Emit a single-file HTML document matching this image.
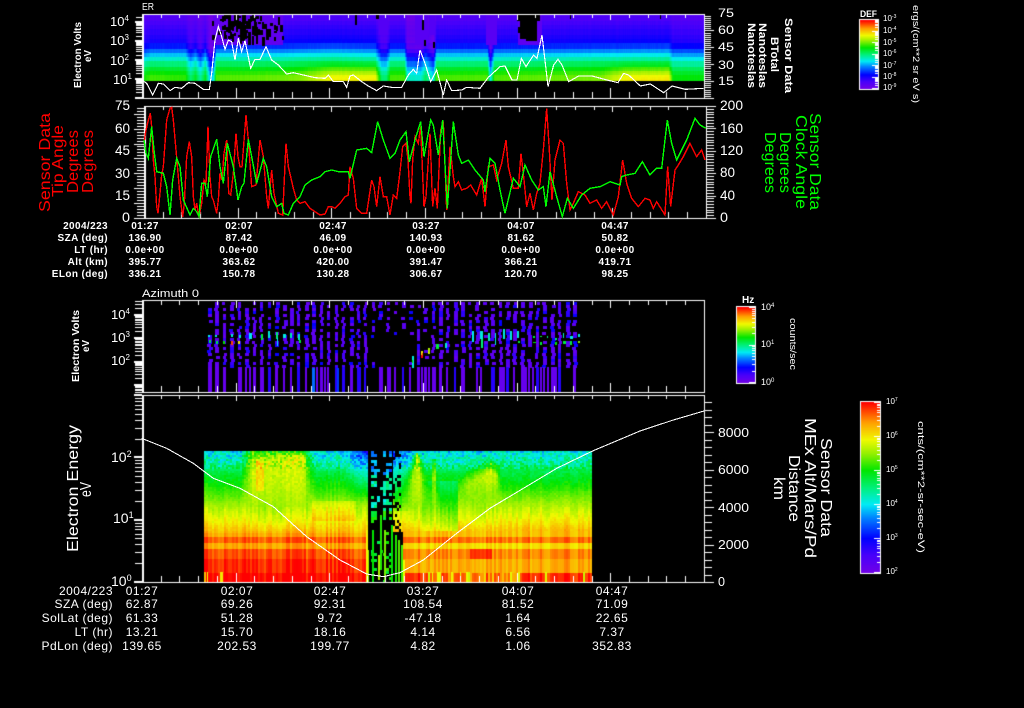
<!DOCTYPE html>
<html><head><meta charset="utf-8"><title>Sensor Data</title>
<style>
html,body{margin:0;padding:0;background:#000;width:1024px;height:708px;overflow:hidden}
canvas,svg{position:absolute;left:0;top:0;display:block}
text{font-family:"Liberation Sans",sans-serif;fill:#fff}
.t{font-size:10px;letter-spacing:.4px;font-weight:bold}
.u{font-size:12px;letter-spacing:.5px}
.m{text-anchor:middle}.e{text-anchor:end}
.r{fill:#f00}.g{fill:#0f0}
.l{fill:none;stroke-width:4.2;stroke-linejoin:miter}
</style></head><body>
<canvas id="c" width="1024" height="708"></canvas>
<svg width="1024" height="708" viewBox="0 0 1024 708" xmlns="http://www.w3.org/2000/svg">
<g shape-rendering="crispEdges">
<g transform="scale(.33333)"><polyline class="l" stroke="#fff" style="stroke-width:3.4" points="426,240 440,250 458,285 475,250 490,252 510,272 525,262 545,265 565,248 585,250 610,268 628,268 635,220 645,120 655,80 665,110 675,148 685,120 695,125 705,180 715,115 725,155 735,122 752,205 765,178 780,178 798,140 815,180 835,195 860,222 880,218 910,225 945,233 975,235 985,225 1000,245 1030,245 1040,262 1050,228 1060,225 1085,245 1105,258 1130,272 1150,258 1175,262 1205,262 1225,225 1240,208 1250,220 1260,150 1275,190 1292,245 1310,210 1330,285 1340,240 1355,272 1385,270 1400,262 1440,265 1465,232 1500,200 1515,198 1536,240 1551,240 1564,175 1578,200 1601,165 1611,175 1626,105 1636,190 1644,260 1661,195 1674,178 1686,195 1706,245 1736,228 1776,228 1821,240 1854,248 1871,220 1886,225 1921,258 1951,252 1991,278 2016,258 2056,268 2111,265"/></g>
<g transform="translate(0,100) scale(.33333)">
<polyline class="l" stroke="#f00" points="432,130 437,95 445,60 451,40 455,80 460,180 465,230 470,320 474,340 480,280 485,225 490,200 500,60 510,25 515,22 520,60 528,150 535,230 540,290 548,350 553,310 560,170 568,125 575,170 580,290 585,330 590,310 597,350 605,310 612,240 618,250 624,80 630,230 635,290 640,300 650,340 655,300 660,220 666,240 672,160 680,120 686,280 692,285 700,220 708,100 714,170 720,200 726,200 738,45 745,120 755,260 768,255 780,120 790,170 800,290 805,325 815,210 822,280 835,340 848,345 858,130 865,200 880,265 890,300 900,310 915,305 930,325 945,335 960,345 975,342 985,320 995,320 1005,325 1020,310 1035,290 1045,285 1050,200 1060,235 1070,325 1085,340 1100,340 1115,240 1122,260 1130,320 1140,230 1150,290 1160,290 1170,345 1180,285 1190,295 1200,215 1208,140 1218,130 1224,180 1230,290 1233,310 1238,180 1245,110 1255,130 1262,80 1272,320 1278,290 1290,100 1298,320 1305,265 1312,325 1322,90 1330,65 1340,330 1350,140 1360,230 1365,260 1375,245 1385,270 1400,265 1412,255 1430,285 1445,235 1455,320 1465,200 1480,195 1490,240 1505,190 1518,120 1525,200 1540,265 1555,265 1563,160 1572,240 1580,320 1590,280 1600,330 1610,280 1620,250 1630,150 1640,25 1648,150 1656,300 1665,180 1680,120 1690,130 1700,250 1710,330 1720,310 1735,275 1755,285 1770,310 1790,300 1805,325 1820,305 1840,345 1855,290 1868,180 1880,250 1895,295 1915,320 1935,295 1950,300 1960,325 1970,305 1995,345 2003,200 2012,320 2025,210 2035,195 2050,170 2070,130 2090,170 2105,150 2115,180"/>
<polyline class="l" stroke="#0f0" points="432,120 438,160 445,175 455,80 462,150 470,215 490,220 500,260 510,345 518,240 530,175 540,200 550,300 570,345 580,325 590,335 597,350 605,250 615,250 622,290 632,170 650,118 660,200 670,250 682,130 700,200 714,300 725,260 732,250 745,118 755,170 770,250 790,175 800,200 815,290 830,320 845,310 852,340 865,345 880,310 900,290 915,255 935,240 960,230 975,215 995,210 1015,215 1045,215 1050,235 1070,150 1100,145 1115,158 1133,65 1150,120 1170,175 1185,160 1200,120 1218,95 1228,185 1245,120 1262,65 1272,170 1292,60 1300,75 1315,165 1328,60 1342,325 1360,65 1375,165 1385,190 1405,180 1425,210 1450,240 1455,275 1470,175 1485,190 1500,270 1515,340 1540,235 1560,260 1575,195 1595,240 1615,270 1630,260 1638,320 1650,215 1670,290 1687,350 1702,295 1720,325 1745,285 1770,265 1800,260 1830,245 1860,255 1865,230 1880,225 1905,220 1927,185 1950,225 1970,205 1985,205 2002,60 2015,130 2030,180 2060,120 2085,55 2100,75 2118,85"/>
</g>
<g transform="translate(40,400) scale(.33333)"><polyline class="l" stroke="#fff" style="stroke-width:3.2" points="305,115 380,145 460,190 520,235 600,265 700,320 800,410 900,480 980,522 1030,530 1080,518 1150,480 1250,400 1350,325 1450,265 1550,205 1660,152 1800,93 1900,60 1992,33"/></g>
</g>

<!-- panel 1 -->
<text x="142" y="10" font-size="10" textLength="12" lengthAdjust="spacingAndGlyphs">ER</text>
<text transform="translate(81,88) rotate(-90)" font-size="10" font-weight="bold" textLength="66" lengthAdjust="spacingAndGlyphs">Electron Volts</text>
<text transform="translate(91,62) rotate(-90)" font-size="10" font-weight="bold" textLength="12" lengthAdjust="spacingAndGlyphs">eV</text>
<text x="110" y="26" font-size="13">10<tspan dy="-5" font-size="8">4</tspan></text>
<text x="110" y="45" font-size="13">10<tspan dy="-5" font-size="8">3</tspan></text>
<text x="110" y="65" font-size="13">10<tspan dy="-5" font-size="8">2</tspan></text>
<text x="113" y="84" font-size="13">10<tspan dy="-5" font-size="8">1</tspan></text>
<text x="718" y="17" font-size="12" textLength="16" lengthAdjust="spacingAndGlyphs">75</text>
<text x="718" y="34" font-size="12" textLength="16" lengthAdjust="spacingAndGlyphs">60</text>
<text x="718" y="51" font-size="12" textLength="16" lengthAdjust="spacingAndGlyphs">45</text>
<text x="718" y="69" font-size="12" textLength="16" lengthAdjust="spacingAndGlyphs">30</text>
<text x="718" y="85" font-size="12" textLength="16" lengthAdjust="spacingAndGlyphs">15</text>
<g font-weight="bold">
<text transform="translate(785,18) rotate(90)" font-size="11" textLength="75" lengthAdjust="spacingAndGlyphs">Sensor Data</text>
<text transform="translate(771,37) rotate(90)" font-size="11" textLength="35" lengthAdjust="spacingAndGlyphs">BTotal</text>
<text transform="translate(759,23) rotate(90)" font-size="11" textLength="65" lengthAdjust="spacingAndGlyphs">Nanoteslas</text>
<text transform="translate(748,23) rotate(90)" font-size="11" textLength="65" lengthAdjust="spacingAndGlyphs">Nanoteslas</text>
</g>
<text x="860" y="17" font-size="9" font-weight="bold" textLength="17" lengthAdjust="spacingAndGlyphs">DEF</text>
<g font-size="8"><text x="883" y="21">10<tspan dy="-3" font-size="5">-3</tspan></text><text x="883" y="33">10<tspan dy="-3" font-size="5">-4</tspan></text><text x="883" y="45">10<tspan dy="-3" font-size="5">-5</tspan></text><text x="883" y="56">10<tspan dy="-3" font-size="5">-6</tspan></text><text x="883" y="68">10<tspan dy="-3" font-size="5">-7</tspan></text><text x="883" y="79">10<tspan dy="-3" font-size="5">-8</tspan></text><text x="883" y="90">10<tspan dy="-3" font-size="5">-9</tspan></text></g>
<text transform="translate(913,5) rotate(90)" font-size="9" textLength="98" lengthAdjust="spacingAndGlyphs">ergs/(cm**2 sr eV s)</text>

<!-- panel 2 -->
<g class="r" font-size="16"><text class="r" transform="translate(50,212) rotate(-90)" textLength="99" lengthAdjust="spacingAndGlyphs">Sensor Data</text>
<text class="r" transform="translate(63,197) rotate(-90)" textLength="72" lengthAdjust="spacingAndGlyphs">Tip Angle</text>
<text class="r" transform="translate(78,193) rotate(-90)" textLength="63" lengthAdjust="spacingAndGlyphs">Degrees</text>
<text class="r" transform="translate(93,193) rotate(-90)" textLength="63" lengthAdjust="spacingAndGlyphs">Degrees</text></g>
<g font-size="14">
<text x="115" y="110" textLength="15" lengthAdjust="spacingAndGlyphs">75</text><text x="115" y="133" textLength="15" lengthAdjust="spacingAndGlyphs">60</text><text x="115" y="155" textLength="15" lengthAdjust="spacingAndGlyphs">45</text><text x="115" y="178" textLength="15" lengthAdjust="spacingAndGlyphs">30</text><text x="115" y="200" textLength="15" lengthAdjust="spacingAndGlyphs">15</text><text x="122" y="222" textLength="8" lengthAdjust="spacingAndGlyphs">0</text>
<text x="720" y="110" textLength="23" lengthAdjust="spacingAndGlyphs">200</text><text x="720" y="133" textLength="23" lengthAdjust="spacingAndGlyphs">160</text><text x="720" y="155" textLength="23" lengthAdjust="spacingAndGlyphs">120</text><text x="720" y="177" textLength="15" lengthAdjust="spacingAndGlyphs">80</text><text x="720" y="200" textLength="15" lengthAdjust="spacingAndGlyphs">40</text><text x="720" y="222" textLength="8" lengthAdjust="spacingAndGlyphs">0</text></g>
<g font-size="16"><text class="g" transform="translate(810,113) rotate(90)" textLength="97" lengthAdjust="spacingAndGlyphs">Sensor Data</text>
<text class="g" transform="translate(796,115) rotate(90)" textLength="94" lengthAdjust="spacingAndGlyphs">Clock Angle</text>
<text class="g" transform="translate(780,132) rotate(90)" textLength="61" lengthAdjust="spacingAndGlyphs">Degrees</text>
<text class="g" transform="translate(765,132) rotate(90)" textLength="61" lengthAdjust="spacingAndGlyphs">Degrees</text></g>
<g class="t">
<text class="t e" x="108" y="229">2004/223</text><text class="t m" x="145" y="229">01:27</text><text class="t m" x="239" y="229">02:07</text><text class="t m" x="333" y="229">02:47</text><text class="t m" x="426" y="229">03:27</text><text class="t m" x="521" y="229">04:07</text><text class="t m" x="615" y="229">04:47</text>
<text class="t e" x="108" y="241">SZA (deg)</text><text class="t m" x="145" y="241">136.90</text><text class="t m" x="239" y="241">87.42</text><text class="t m" x="333" y="241">46.09</text><text class="t m" x="426" y="241">140.93</text><text class="t m" x="521" y="241">81.62</text><text class="t m" x="615" y="241">50.82</text>
<text class="t e" x="108" y="253">LT (hr)</text><text class="t m" x="145" y="253">0.0e+00</text><text class="t m" x="239" y="253">0.0e+00</text><text class="t m" x="333" y="253">0.0e+00</text><text class="t m" x="426" y="253">0.0e+00</text><text class="t m" x="521" y="253">0.0e+00</text><text class="t m" x="615" y="253">0.0e+00</text>
<text class="t e" x="108" y="265">Alt (km)</text><text class="t m" x="145" y="265">395.77</text><text class="t m" x="239" y="265">363.62</text><text class="t m" x="333" y="265">420.00</text><text class="t m" x="426" y="265">391.47</text><text class="t m" x="521" y="265">366.21</text><text class="t m" x="615" y="265">419.71</text>
<text class="t e" x="108" y="277">ELon (deg)</text><text class="t m" x="145" y="277">336.21</text><text class="t m" x="239" y="277">150.78</text><text class="t m" x="333" y="277">130.28</text><text class="t m" x="426" y="277">306.67</text><text class="t m" x="521" y="277">120.70</text><text class="t m" x="615" y="277">98.25</text>
</g>

<!-- panel 3 -->
<text x="142" y="297" font-size="11" textLength="57" lengthAdjust="spacingAndGlyphs">Azimuth 0</text>
<text transform="translate(79,382) rotate(-90)" font-size="10" font-weight="bold" textLength="72" lengthAdjust="spacingAndGlyphs">Electron Volts</text>
<text transform="translate(89,352) rotate(-90)" font-size="10" font-weight="bold" textLength="12" lengthAdjust="spacingAndGlyphs">eV</text>
<text x="111" y="319" font-size="13">10<tspan dy="-5" font-size="8">4</tspan></text>
<text x="111" y="342" font-size="13">10<tspan dy="-5" font-size="8">3</tspan></text>
<text x="111" y="365" font-size="13">10<tspan dy="-5" font-size="8">2</tspan></text>
<text x="742" y="303" font-size="10" font-weight="bold">Hz</text>
<text x="761" y="310" font-size="9">10<tspan dy="-3" font-size="6">4</tspan></text>
<text x="761" y="347" font-size="9">10<tspan dy="-3" font-size="6">1</tspan></text>
<text x="761" y="385" font-size="9">10<tspan dy="-3" font-size="6">0</tspan></text>
<text transform="translate(790,318) rotate(90)" font-size="9" textLength="52" lengthAdjust="spacingAndGlyphs">counts/sec</text>

<!-- panel 4 -->
<text transform="translate(78,552) rotate(-90)" font-size="16" textLength="127" lengthAdjust="spacingAndGlyphs">Electron Energy</text>
<text transform="translate(91,497) rotate(-90)" font-size="16" textLength="15" lengthAdjust="spacingAndGlyphs">eV</text>
<text x="111" y="462" font-size="14">10<tspan dy="-5" font-size="9">2</tspan></text>
<text x="113" y="523" font-size="14">10<tspan dy="-5" font-size="9">1</tspan></text>
<text x="111" y="586" font-size="14">10<tspan dy="-5" font-size="9">0</tspan></text>
<g font-size="13"><text x="718" y="437" textLength="31" lengthAdjust="spacingAndGlyphs">8000</text><text x="718" y="474" textLength="31" lengthAdjust="spacingAndGlyphs">6000</text><text x="718" y="512" textLength="31" lengthAdjust="spacingAndGlyphs">4000</text><text x="718" y="549" textLength="31" lengthAdjust="spacingAndGlyphs">2000</text><text x="718" y="586" textLength="7" lengthAdjust="spacingAndGlyphs">0</text></g>
<g font-size="16"><text transform="translate(821,438) rotate(90)" textLength="99" lengthAdjust="spacingAndGlyphs">Sensor Data</text>
<text transform="translate(805,418) rotate(90)" textLength="140" lengthAdjust="spacingAndGlyphs">MEx Alt/Mars/Pd</text>
<text transform="translate(789,455) rotate(90)" textLength="67" lengthAdjust="spacingAndGlyphs">Distance</text>
<text transform="translate(774,477) rotate(90)" textLength="23" lengthAdjust="spacingAndGlyphs">km</text></g>
<g>
<text class="u e" x="113" y="595">2004/223</text><text class="u m" x="142" y="595">01:27</text><text class="u m" x="237" y="595">02:07</text><text class="u m" x="330" y="595">02:47</text><text class="u m" x="423" y="595">03:27</text><text class="u m" x="518" y="595">04:07</text><text class="u m" x="612" y="595">04:47</text>
<text class="u e" x="113" y="608">SZA (deg)</text><text class="u m" x="142" y="608">62.87</text><text class="u m" x="237" y="608">69.26</text><text class="u m" x="330" y="608">92.31</text><text class="u m" x="423" y="608">108.54</text><text class="u m" x="518" y="608">81.52</text><text class="u m" x="612" y="608">71.09</text>
<text class="u e" x="113" y="622">SolLat (deg)</text><text class="u m" x="142" y="622">61.33</text><text class="u m" x="237" y="622">51.28</text><text class="u m" x="330" y="622">9.72</text><text class="u m" x="423" y="622">-47.18</text><text class="u m" x="518" y="622">1.64</text><text class="u m" x="612" y="622">22.65</text>
<text class="u e" x="113" y="636">LT (hr)</text><text class="u m" x="142" y="636">13.21</text><text class="u m" x="237" y="636">15.70</text><text class="u m" x="330" y="636">18.16</text><text class="u m" x="423" y="636">4.14</text><text class="u m" x="518" y="636">6.56</text><text class="u m" x="612" y="636">7.37</text>
<text class="u e" x="113" y="650">PdLon (deg)</text><text class="u m" x="142" y="650">139.65</text><text class="u m" x="237" y="650">202.53</text><text class="u m" x="330" y="650">199.77</text><text class="u m" x="423" y="650">4.82</text><text class="u m" x="518" y="650">1.06</text><text class="u m" x="612" y="650">352.83</text>
</g>
<g font-size="8"><text x="886" y="404">10<tspan dy="-3" font-size="5">7</tspan></text><text x="886" y="438">10<tspan dy="-3" font-size="5">6</tspan></text><text x="886" y="472">10<tspan dy="-3" font-size="5">5</tspan></text><text x="886" y="506">10<tspan dy="-3" font-size="5">4</tspan></text><text x="886" y="540">10<tspan dy="-3" font-size="5">3</tspan></text><text x="886" y="574">10<tspan dy="-3" font-size="5">2</tspan></text></g>
<text transform="translate(918,421) rotate(90)" font-size="9" textLength="132" lengthAdjust="spacingAndGlyphs">cnts/(cm**2-sr-sec-eV)</text>
</svg>
<script>
(function(){
var c=document.getElementById('c').getContext('2d');
c.fillStyle='#000';c.fillRect(0,0,1024,708);
var s=12345;function R(){s=(s*1664525+1013904223)>>>0;return s/4294967296;}
function L(k,x){if(x<=k[0][0])return k[0][1];for(var i=1;i<k.length;i++){if(x<=k[i][0]){var a=k[i-1],b=k[i];return a[1]+(b[1]-a[1])*(x-a[0])/(b[0]-a[0]);}}return k[k.length-1][1];}
var M=[[0,[112,0,232]],[.1,[72,0,250]],[.2,[0,0,255]],[.32,[0,130,255]],[.4,[0,235,245]],[.5,[0,240,120]],[.6,[0,230,0]],[.7,[150,240,0]],[.78,[240,250,0]],[.88,[255,160,0]],[1,[255,0,0]]];
function col(v){v=Math.max(0,Math.min(1,v));for(var i=1;i<M.length;i++){if(v<=M[i][0]){var a=M[i-1],b=M[i],t=(v-a[0])/(b[0]-a[0]);return 'rgb('+Math.round(a[1][0]+(b[1][0]-a[1][0])*t)+','+Math.round(a[1][1]+(b[1][1]-a[1][1])*t)+','+Math.round(a[1][2]+(b[1][2]-a[1][2])*t)+')';}}return 'rgb(255,0,0)';}
function P(v,x,y,w,h){c.fillStyle=col(v);c.fillRect(x,y,w,h);}
function K(x,y,w,h){c.fillStyle='#000';c.fillRect(x,y,w,h);}
function W(x,y,w,h){c.fillStyle='#fff';c.fillRect(x,y,w,h);}

/* panel 1 */
var p1=[[15,.07],[22,.10],[30,.13],[40,.17],[44,.21],[48,.28],[53,.36],[58,.43],[63,.50],[68,.56],[73,.60],[78,.63],[80,.64]];
var m1=[[142,-.05],[150,0],[185,0],[190,-.12],[195,-.05],[200,-.16],[205,-.05],[210,-.28],[213,-.22],[216,.02],[280,.02],[330,.05],[375,.03],[381,-.14],[386,-.14],[390,0],[404,0],[407,-.2],[420,-.22],[425,-.12],[433,-.25],[436,0],[487,0],[490,-.25],[494,0],[620,.03],[668,.04],[672,-.03],[704,-.03]];
var yb=[[142,.02],[190,0],[300,.03],[330,.1],[375,.12],[382,.02],[600,.03],[625,.12],[668,.12],[673,.0],[704,0]];
for(var x=143;x<704;x++){
 var mod=L(m1,x),nc=(R()-.5)*.012,bo=L(yb,x);
 for(var y=15;y<80;y+=2){
  var yy=15+Math.floor((y-15)/4.6)*4.6;
  var v=L(p1,yy+2)+mod*L([[15,.3],[35,.5],[50,1],[80,1]],y)+nc+bo*L([[60,0],[75,1],[80,1.2]],y);
  if(y<45){
   if(x>212&&x<283)v=.04;
   else if(x>517&&x<542)v=.05;
   else if((x>414&&x<428)||(x>485&&x<497))v=.06;
   else if(((x>378&&x<388)||(x>428&&x<435))&&y<35)v=.07;
  }
  P(v,x,y,1,2);
 }
}
/* black speckle */
for(var i=0;i<150;i++){var x=212+R()*72,den=L([[212,.1],[222,.35],[235,1],[253,1],[262,.45],[284,.35]],x);if(R()<den){K(Math.floor(x/2)*2,15+Math.floor(R()*23),2+Math.floor(R()*2),2+Math.floor(R()*8));}}
K(517,15,23,6);K(520,21,17,18);K(526,15,11,26);K(518,27,3,6);
K(355,15,2,10);K(376,15,3,4);K(422,20,2,10);K(424,40,2,6);K(433,42,2,6);K(570,15,1,4);K(660,15,1,4);

/* panel 3 */
for(var i=0;i<50;i++){
 var cx=208+i*7.45,cw=3+Math.floor(R()*2);
 for(var y=302;y<366;y+=3){
  var off=R()<.3?(R()<.5?-1:1):0;
  var p=.74; if(cx>365&&cx<410){p=y>332&&y<360?.04:.32;} if(cx>=410&&cx<425)p=.45;
  if(R()<p){P(R()<.7?.03+R()*.05:.1+R()*.1,Math.round(cx+off),y,cw,3);}
 }
 if(R()<.9){var bw=2+Math.floor(R()*3),bv=R()<.72?.03:.15;P(bv,Math.round(cx),367,bw,25);if(R()<.3)P(.03,Math.round(cx+4),367,2,25);}
}
K(582,301,6,91);
P(.3,312,368,3,24);P(.25,337,368,2,24);
var hs=[[209,340,2,3,.55],[216,341,2,3,.55],[223,341,2,3,.6],[231,341,2,4,.95],[238,341,2,3,.8],[208,335,2,2,.4],[215,335,2,2,.42],[231,334,2,3,.42],[239,335,2,3,.42],[249,333,3,6,.4],[261,334,2,6,.55],[268,331,2,7,.42],[276,332,2,7,.5],[277,338,1,8,.4],[283,334,3,4,.42],[290,333,2,5,.45],[298,334,2,6,.42],[299,340,2,3,.55],
[412,356,2,12,.42],[412,360,1,3,.6],[421,351,2,5,.8],[421,355,2,3,1],[422,353,1,3,.95],[428,348,2,6,.72],[428,352,1,2,.8],[436,344,3,5,.55],[445,343,2,5,.42],
[472,331,2,11,.4],[480,331,3,8,.42],[481,339,2,9,.5],[488,333,2,8,.45],[495,333,1,12,.42],[503,329,2,10,.42],[510,331,2,9,.42],[517,331,2,7,.42],[518,341,2,2,.55],[533,336,2,2,.55],[533,342,3,1,.6],[540,336,2,1,.55],[540,342,2,3,.55],[547,336,1,2,.5],[555,338,2,2,.5],[555,342,2,3,.6],[563,333,1,5,.45],[563,341,3,3,.55],[570,336,3,3,.42],[570,341,2,4,.55],[578,334,2,3,.42],[578,341,2,2,.68]];
hs.forEach(function(h){P(h[4],h[0],h[1],h[2],h[3]);});

/* panel 4 */
var Q=[[451,.40],[462,.46],[472,.55],[482,.6],[495,.66],[508,.73],[520,.79],[531,.85]];
var B=[[451,.62],[456,.72],[470,.75],[490,.73],[505,.71],[520,.77],[531,.85]];
var bL=[[533,537,.87],[537,543,.93],[543,549,.87],[549,559,.94],[559,572,.97],[572,582,1]];
var bR=[[533,537,.85],[537,543,.92],[543,549,.82],[549,559,.9],[559,572,.87],[572,582,.97]];
function H(x,y){
 var h=L([[204,0],[240,0],[252,1],[302,1],[313,0],[700,0]],x);
 if(y>451){var w=1.5+(y-451)*.24;if(w>11)w=11;var d=(x-416)/w;h=Math.max(h,Math.exp(-d*d));}
 if(y>458){var w2=1+(y-458)*.08;if(w2>5)w2=5;var d2=(x-433)/w2;h=Math.max(h,.8*Math.exp(-d2*d2));}
 if(x>452&&x<500){
  var ty=x>490?454+(x-490)*.8:454+(490-x)*.6;
  var e=Math.min(1,Math.max(0,(y-ty)/16))*L([[452,0],[468,.85],[490,1],[496,.8],[500,0]],x)*L([[480,1],[500,.55],[530,.3]],y);
  h=Math.max(h,e);
 }
 return h;
}
for(var x=204;x<592;x+=2){
 var n=(R()-.5),n2=R();
 for(var y=451;y<582;y+=2){
  var v;
  if(y<531){
   var q=L(Q,y),b=L(B,y),h=H(x,y);
   if(x>420&&x<458&&y>480)q-=.08;
   if(x>495&&y>490)q+=.01;
   if(x>310&&x<356&&y>500&&y<520)q+=.05;
   if(x>495&&y<470)q+=.02;
   v=q+(b-q)*h;
   if(x>254&&x<264&&y>458&&y<490)v+=.07;
   var amp=y<468?.16:y<485?.05:.03;
   v+=(R()-.5)*amp+n*(y>505?.07:.03);
   if(x>338&&x<393&&y<500)v-=L([[338,.02],[350,.06],[368,.2],[393,.2]],x)*L([[451,1],[480,.5],[500,.1]],y);
   if(x>=393&&x<412&&y<510)v-=.16*L([[393,1],[412,.1]],x)*L([[451,1],[510,.4]],y);
  }else{
   var T=x>400?bR:bL,base=.85;for(var j=0;j<T.length;j++)if(y>=T[j][0]&&y<T[j][1])base=T[j][2];
   v=base+n*.08;
   if(x>468&&x<492&&y>=549&&y<559)v=.97+n*.04;
   if(x>430&&x<520&&y>=572)v-=.12*n2;
  }
  P(v,x,y,2,2);
 }
}
P(.85,204,572,2,10);P(.78,207,572,1,10);P(.8,220,572,3,10);
/* dip region */
K(368,451,25,131);K(393,532,10,50);
for(var i=0;i<40;i++){K(393+Math.floor(R()*4)*2,451+Math.floor(R()*27)*3,2,3);}
for(var i=0;i<300;i++){var x=371+Math.floor(R()*7)*3,y=451+Math.floor(R()*44)*3;
 if(x>376&&x<382&&R()<.85)continue;
 if(R()<(y<520?.8:.2)){var v=y<475?.25+R()*.15:y<510?.4+R()*.12:.5+R()*.15;P(v,x,y,3,3);}}
[[372,530,2,52,.6],[380,515,2,55,.62],[384,530,2,52,.68],[391,525,2,57,.6],[395,535,2,47,.62],[398,540,2,42,.66],[401,545,2,37,.64],[378,555,2,25,.72]].forEach(function(h){P(h[4],h[0],h[1],h[2],h[3]);});
P(.78,366,530,2,52);P(.7,368,550,1,32);P(.78,403,560,2,22);
/* x stripes in bottom */
for(var i=0;i<14;i++){var x=420+Math.floor(R()*170);P(.74+R()*.05,x,572,1+Math.floor(R()*2),10);}

/* frames */
function frame(x1,y1,x2,y2){W(x1,y1,x2-x1+1,1);W(x1,y2,x2-x1+1,1);W(x1,y1,1,y2-y1+1);W(x2,y1,1,y2-y1+1);}
function xt(x0,dx,n,y1,y2,mt,Mt,mb,Mb){for(var i=0;i<=n;i++){var X=Math.round(x0+i*dx),maj=i%5==0;W(X,y1,1,maj?Mt:mt);var h=maj?Mb:mb;W(X,y2-h,1,h);}}
function logt(yd,dec,yTop,yBot,x,len){for(var d=-4;d<6;d++){for(var k=1;k<10;k++){var Y=Math.round(yd-dec*d-dec*Math.log10(k));if(Y>=yTop&&Y<=yBot){var l=k==1?len+1:len;if(k==1){W(x-l,Y-1,l,2);}else W(x-l,Y,l,1);}}}}
function lint(y0,dy,yTop,x,len,dir,every,Mlen){var i=0;for(var Y=y0;Y>=yTop-.01;Y-=dy){var m=i%every==0,l=m?Mlen:len;if(dir>0)W(x,Math.round(Y),l,1);else W(x-l,Math.round(Y),l,1);i++;}}
/* p1 */
frame(142,14,704,98);W(143,14,1,85);
xt(142,18.73,30,14,98,4,6,6,10);
logt(98,18.9,14,98,142,6);
lint(98,2.11,14,705,6,1,8,9);
/* p2 */
frame(144,106,706,218);W(145,106,1,113);
xt(144,18.73,30,106,218,4,6,6,10);
lint(218,2.98,106,144,7,-1,5,10);
lint(218,2.8,106,707,7,1,8,9);
/* p3 */
frame(142,300,704,392);W(143,300,1,93);
xt(142,18.73,30,300,392,5,8,6,9);
logt(361.7,23.3,300,392,142,7);
/* p4 */
frame(142,395,704,582);W(143,395,1,188);
xt(142,18.73,30,395,582,4,6,6,9);
logt(582,62.3,395,582,142,7);
lint(582,7.5,395,705,7,1,5,9);

/* colorbars */
function bar(x1,y1,x2,y2,dec){
 for(var y=y1;y<=y2;y++){P((y2-y)/(y2-y1),x1,y,x2-x1,1);}
 frame(x1-1,y1-1,x2,y2+1);
 for(var d=0;d*dec<=y2-y1+.5;d++){for(var k=1;k<10;k++){var Y=Math.round(y2-d*dec-dec*Math.log10(k));if(Y>=y1&&Y<=y2){W(x2-(k==1?6:3),Y,k==1?6:3,1);}}}
}
bar(860,20,878,88,11.5);
bar(737,307,755,382,37.5);
bar(861,402,880,572,34);
})();
</script>
</body></html>
